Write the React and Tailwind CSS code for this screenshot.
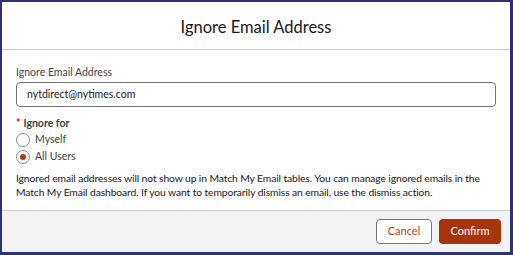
import { useState } from "react";

const Radio = ({ label, checked, onChange }) => (
  <label className="flex items-center gap-[5px] h-[17px] cursor-pointer">
    <span
      className="flex items-center justify-center w-[14px] h-[14px] rounded-full border border-[#8a8a8a] bg-white"
      onClick={onChange}
    >
      {checked && <span className="w-[6px] h-[6px] rounded-full bg-[#b43a10]" />}
    </span>
    <span className="text-[10.5px] text-[#3e3e3c]">{label}</span>
  </label>
);

export default function App() {
  const [email, setEmail] = useState("nytdirect@nytimes.com");
  const [scope, setScope] = useState("all");

  return (
    <div
      className="w-[513px] h-[255px] bg-[#2d3271] pl-[2px] pt-[2px] pr-[3px] pb-[3px]"
      style={{ fontFamily: 'Lato, "Open Sans", sans-serif' }}
    >
      <div className="flex flex-col h-full bg-white">
        {/* Header */}
        <div className="h-[48px] flex items-center justify-center border-b border-[#c9c9c9] pt-[3px]">
          <h1 className="text-[16.5px] text-[#181818]">Ignore Email Address</h1>
        </div>

        {/* Body */}
        <div className="flex-1 px-[14px] pt-[15px]">
          <label className="block text-[10.5px] text-[#444444] leading-[14px] mb-[1px]">
            Ignore Email Address
          </label>
          <input
            className="w-full h-[25px] border border-[#747474] rounded-[4px] px-[10px] text-[10.5px] text-[#181818] outline-none"
            value={email}
            onChange={(e) => setEmail(e.target.value)}
          />

          <div className="mt-[9px] text-[10.5px] font-bold text-[#3e3e3c] leading-[14px]">
            <span className="text-[#ba0517] mr-[3px]">*</span>Ignore for
          </div>
          <div className="flex flex-col mt-[2px]">
            <Radio label="Myself" checked={scope === "me"} onChange={() => setScope("me")} />
            <Radio label="All Users" checked={scope === "all"} onChange={() => setScope("all")} />
          </div>

          <p className="mt-[5px] text-[10.3px] leading-[14px] text-[#181818] tracking-[-0.1px]">
            Ignored email addresses will not show up in Match My Email tables. You can manage ignored emails in the
            Match My Email dashboard. If you want to temporarily dismiss an email, use the dismiss action.
          </p>
        </div>

        {/* Footer */}
        <div className="h-[42px] bg-[#f3f3f3] border-t border-[#c9c9c9] flex items-center justify-end gap-[7px] pr-[9px]">
          <button className="h-[25px] w-[56px] bg-white border border-[#747474] rounded-[4px] text-[11px] text-[#b8420f]">
            Cancel
          </button>
          <button className="h-[25px] w-[62px] bg-[#a8340c] rounded-[4px] text-[11px] text-white">
            Confirm
          </button>
        </div>
      </div>
    </div>
  );
}
